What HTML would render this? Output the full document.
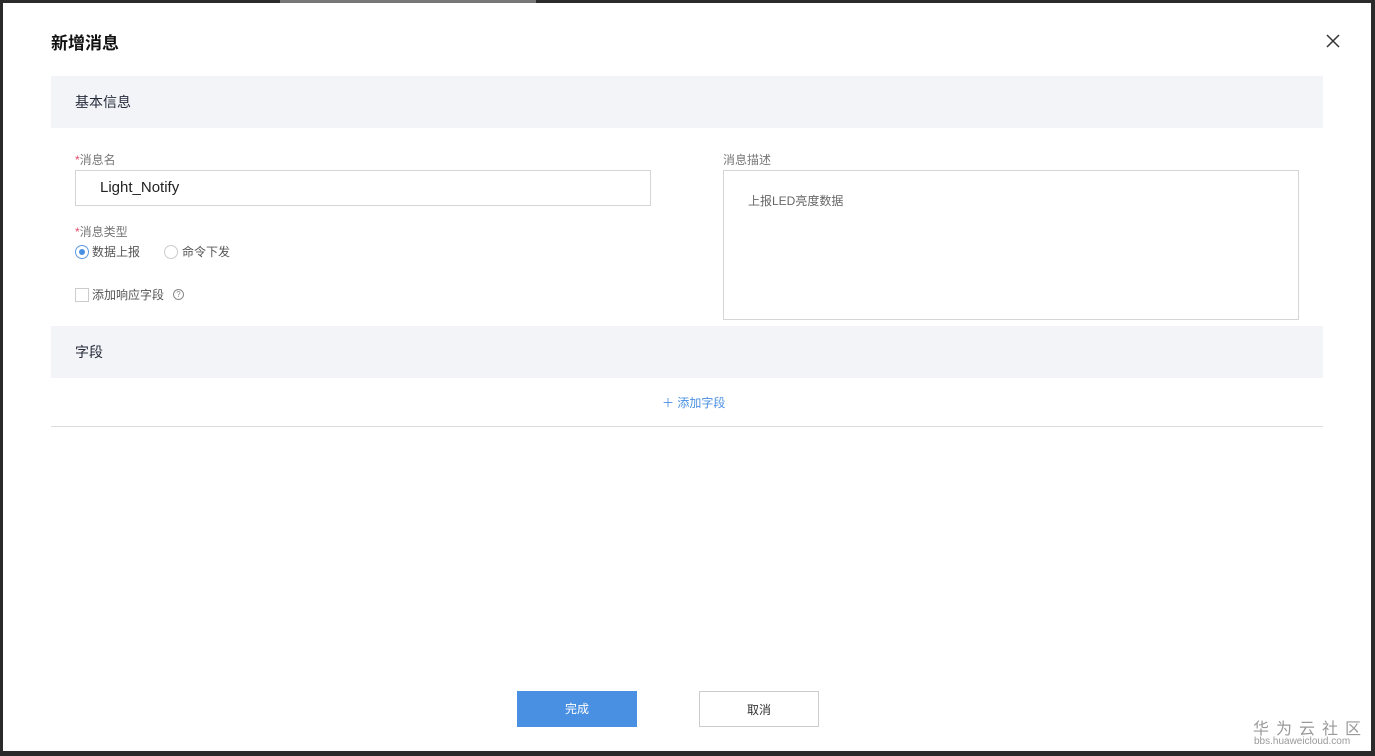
<!DOCTYPE html>
<html><head><meta charset="utf-8"><style>
*{box-sizing:border-box;margin:0;padding:0}
html,body{width:1375px;height:756px}
body{background:#2b2b2b;position:relative;overflow:hidden;font-family:"Liberation Sans","Noto Sans CJK SC",sans-serif;color:#333}
.dlg{position:absolute;left:3px;top:3px;width:1368px;height:748px;background:#fff}
.abs{position:absolute;white-space:nowrap}
.sec{position:absolute;left:48px;width:1272px;height:52px;background:#f3f4f7;font-size:14px;color:#252b3a;padding-left:24px;line-height:52px}
.lbl{font-size:12px;color:#777}
.lbl b{color:#e04b6b;font-weight:normal}
.btn{position:absolute;top:688px;width:120px;height:36px;font-size:12px;text-align:center;line-height:36px}
</style></head><body>
<div class="abs" style="left:280px;top:0;width:256px;height:3px;background:#777"></div>
<div class="dlg">
<div class="abs" style="left:48px;top:26px;font-size:17px;font-weight:bold;color:#111">新增消息</div>
<svg class="abs" style="left:1323px;top:31px" width="14" height="14"><path d="M1 1L13 13M13 1L1 13" stroke="#333" stroke-width="1.5"/></svg>
<div class="sec" style="top:73px">基本信息</div>
<div class="abs lbl" style="left:72px;top:148px"><b>*</b>消息名</div>
<div class="abs" style="left:72px;top:167px;width:576px;height:36px;border:1px solid #d5d5d5;font-size:15px;color:#222;padding-left:24px;line-height:34px">Light_Notify</div>
<div class="abs lbl" style="left:72px;top:220px"><b>*</b>消息类型</div>
<div class="abs" style="left:72px;top:242px;width:14px;height:14px;border:1px solid #5e9be0;border-radius:50%"><div style="margin:3px;width:6px;height:6px;border-radius:50%;background:#4a90e2"></div></div>
<div class="abs" style="left:89px;top:240px;font-size:12px;color:#555">数据上报</div>
<div class="abs" style="left:161px;top:242px;width:14px;height:14px;border:1px solid #ccc;border-radius:50%"></div>
<div class="abs" style="left:179px;top:240px;font-size:12px;color:#555">命令下发</div>
<div class="abs" style="left:72px;top:285px;width:14px;height:14px;border:1px solid #ccc"></div>
<div class="abs" style="left:89px;top:283px;font-size:12px;color:#555">添加响应字段</div>
<div class="abs" style="left:170px;top:286px;width:11px;height:11px;border:1px solid #888;border-radius:50%;font-size:8px;line-height:9px;text-align:center;color:#888">?</div>
<div class="abs lbl" style="left:720px;top:148px">消息描述</div>
<div class="abs" style="left:720px;top:167px;width:576px;height:150px;border:1px solid #d5d5d5;font-size:12px;color:#666;padding:21px 0 0 24px">上报LED亮度数据</div>
<div class="sec" style="top:323px">字段</div>
<div class="abs" style="left:659px;top:391px;font-size:12px;color:#4a90e2">＋ 添加字段</div>
<div class="abs" style="left:48px;top:423px;width:1272px;height:1px;background:#ddd"></div>
<div class="btn" style="left:514px;background:#4a90e2;color:#fff">完成</div>
<div class="btn" style="left:696px;border:1px solid #ccc;color:#333">取消</div>
<div class="abs" style="left:1250px;top:712px;font-size:16px;color:#999;letter-spacing:7px">华为云社区</div>
<div class="abs" style="left:1251px;top:733px;font-size:10px;color:#999">bbs.huaweicloud.com</div>
</div>
</body></html>
